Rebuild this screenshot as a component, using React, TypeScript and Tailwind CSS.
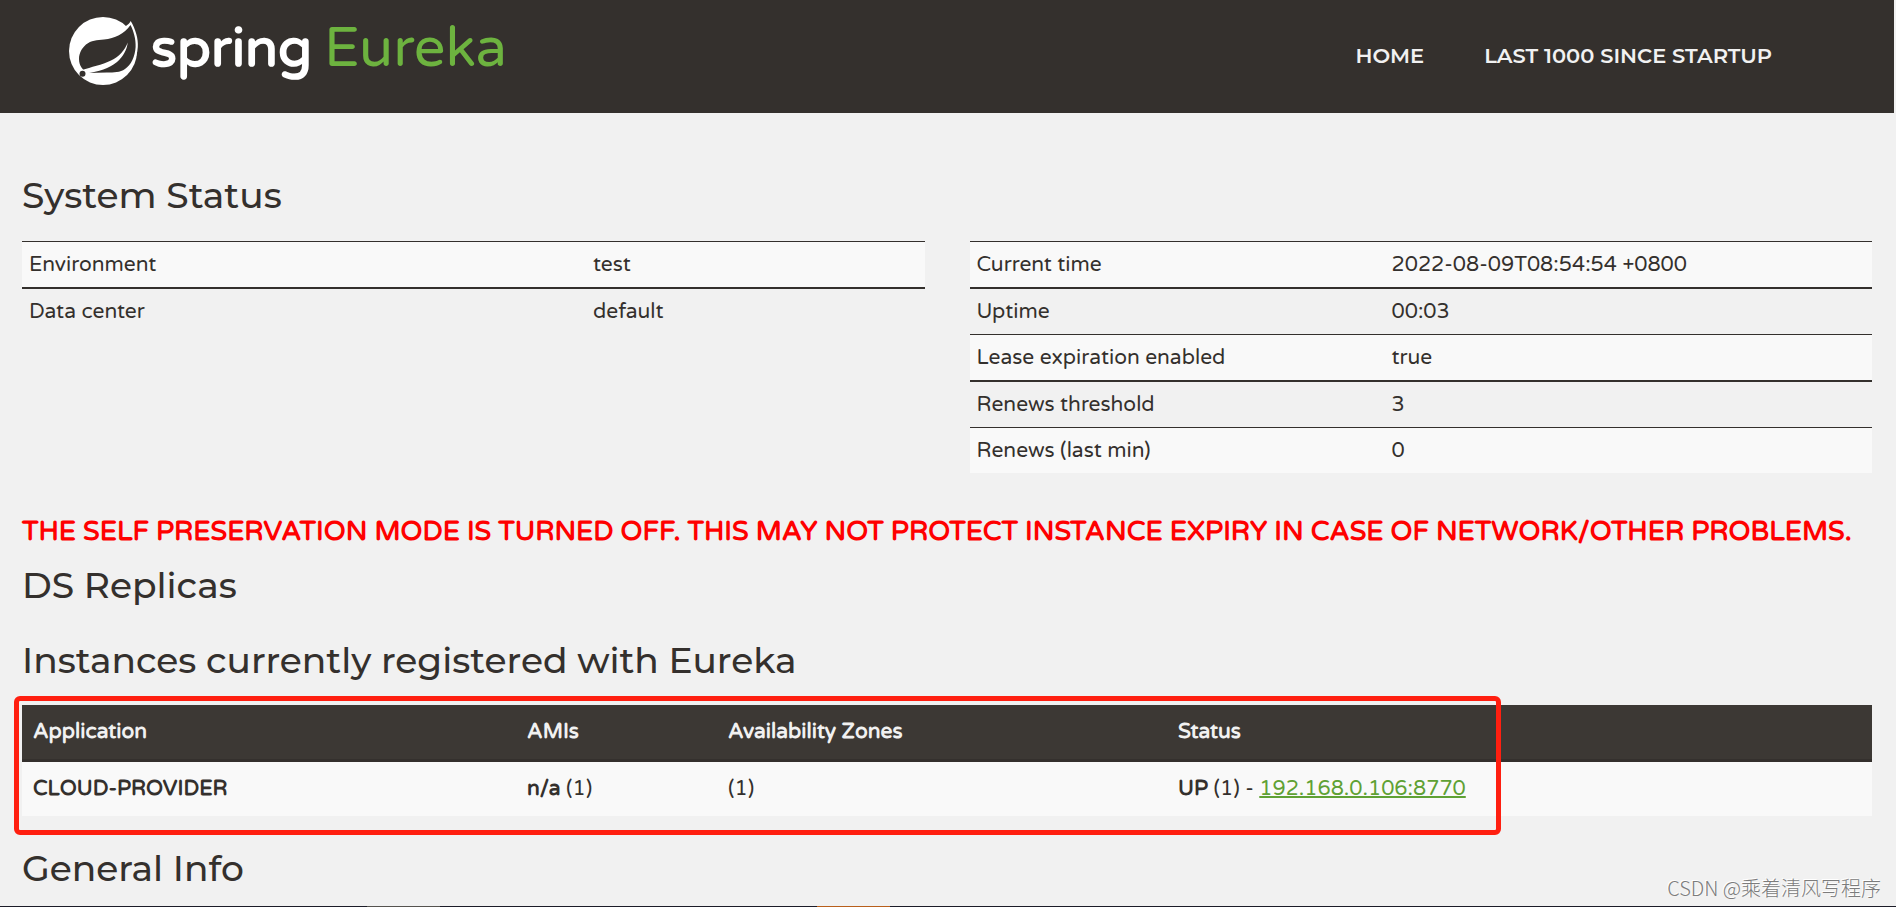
import React from "react";

const systemInfo = [
  ["Environment", "test"],
  ["Data center", "default"],
];

const runtimeInfo = [
  ["Current time", "2022-08-09T08:54:54 +0800"],
  ["Uptime", "00:03"],
  ["Lease expiration enabled", "true"],
  ["Renews threshold", "3"],
  ["Renews (last min)", "0"],
];

function SpringLeaf() {
  return (
    <svg viewBox="0 0 70 68" className="h-[68px] w-[70px]" aria-hidden="true">
      <circle cx="34" cy="34" r="34" fill="#fff" />
      <path
        d="M61.7 4C66.500 12 69.500 22 68.800 30C68 42 63 52 54 58L40 58L50 12C56 10 59.500 8 61.700 4Z"
        fill="#fff"
      />
      <path
        d="M61.500 8C64.500 14 67 22 66.600 30C66 40 62 48 56 52C51 55.500 45 55.500 38 55.600L18 56C14 53 10 49 10 42C10 36 13 31 17 27.500C22 23.500 28 23 35 22.500C46 21.500 55 17 61.500 8Z"
        fill="#34302d"
      />
      <path d="M58.700 25.500C56 33 50 40 42 43.500C33 48 22 50 13 53L17 56.500C30 54.500 40 51.500 48 45C54 39.500 58 33 58.700 25.500Z" fill="#fff" />
      <circle cx="13.500" cy="56.700" r="3" fill="#34302d" />
    </svg>
  );
}

function Heading({ children }: { children: React.ReactNode }) {
  return <h1 className="font-['Montserrat','Inter',sans-serif] text-4xl leading-10 font-medium">{children}</h1>;
}

function InfoTable({ rows, label, firstColumn }: { rows: string[][]; label: string; firstColumn: string }) {
  return (
    <table aria-label={label} className="w-full table-fixed border-collapse text-[21px] leading-[27px]">
      <colgroup>
        <col className={firstColumn} />
        <col />
      </colgroup>
      <tbody>
        {rows.map(([name, value], i) => (
          <tr
            key={name}
            className={i % 2 === 0 ? "border-t border-[#34302d] bg-[#f9f9f9]" : "border-t-2 border-[#34302d]"}
          >
            <td className="px-[7px] py-[9px]">{name}</td>
            <td className="px-[7px] py-[9px]">{value}</td>
          </tr>
        ))}
      </tbody>
    </table>
  );
}

export default function App() {
  return (
    <div className="relative h-screen overflow-hidden bg-[#f1f1f1] pr-0.5 font-['Varela_Round','Inter',sans-serif] text-[#34302d]">
      <header className="flex h-[113px] items-start justify-between bg-[#34302d] pr-[122px] pl-[69px]">
        <a href="#" className="flex items-start gap-3 pt-[17px]">
          <SpringLeaf />
          <span className="flex items-baseline gap-3 pt-0.5 leading-[60px]">
            <span className="text-[54px] font-bold text-white">spring</span>
            <span className="text-[56px] text-[#6db33f]">Eureka</span>
          </span>
        </a>
        <nav className="flex gap-[60px] pt-[42px] font-['Montserrat','Inter',sans-serif] text-[21px] leading-7 font-semibold text-[#f1f1f1]">
          <a href="#">HOME</a>
          <a href="#">LAST 1000 SINCE STARTUP</a>
        </nav>
      </header>

      <main className="px-[22px] pt-[62px]">
        <Heading>System Status</Heading>
        <div className="mt-[26px] grid grid-cols-2 items-start gap-[45px]">
          <InfoTable rows={systemInfo} label="System" firstColumn="w-[564px]" />
          <InfoTable rows={runtimeInfo} label="Runtime" firstColumn="w-[415px]" />
        </div>

        <h4 className="mt-[43px] text-[27px] leading-8 font-bold whitespace-nowrap text-[#ff0000]">
          THE SELF PRESERVATION MODE IS TURNED OFF. THIS MAY NOT PROTECT INSTANCE EXPIRY IN CASE OF NETWORK/OTHER
          PROBLEMS.
        </h4>

        <div className="mt-[17px] flex flex-col gap-[35px]">
          <Heading>DS Replicas</Heading>
          <Heading>Instances currently registered with Eureka</Heading>
        </div>

        <div className="relative mt-[25px]">
          <table className="w-full table-fixed border-separate border-spacing-0 text-[21px] leading-7">
            <thead>
              <tr className="bg-[#3c3834] text-left text-[#f1f1f1]">
                <th className="w-[494px] border-b-[3px] border-[#34302d] px-[11px] py-[13px] font-bold">
                  Application
                </th>
                <th className="w-[201px] border-b-[3px] border-[#34302d] px-[11px] py-[13px] font-bold">AMIs</th>
                <th className="w-[450px] border-b-[3px] border-[#34302d] px-[11px] py-[13px] font-bold">
                  Availability Zones
                </th>
                <th className="border-b-[3px] border-[#34302d] px-[11px] py-[13px] font-bold">Status</th>
              </tr>
            </thead>
            <tbody>
              <tr className="bg-[#f9f9f9]">
                <td className="px-[11px] py-[13px] font-bold">CLOUD-PROVIDER</td>
                <td className="px-[11px] py-[13px]">
                  <b className="font-bold">n/a</b> (1)
                </td>
                <td className="px-[11px] py-[13px]">(1)</td>
                <td className="px-[11px] py-[13px]">
                  <b className="font-bold">UP</b> (1) -{" "}
                  <a href="#" className="text-[#5fa134] underline decoration-2">
                    192.168.0.106:8770
                  </a>
                </td>
              </tr>
            </tbody>
          </table>
          <div className="pointer-events-none absolute -top-[9px] -left-2 h-[139px] w-[1487px] rounded-md border-[5px] border-[#ff1f10]" />
        </div>

        <div className="mt-8">
          <Heading>General Info</Heading>
        </div>
      </main>

      <p className="absolute right-[15px] bottom-[5px] font-['Noto_Sans_CJK_SC',sans-serif] text-xl leading-7 font-light text-[#7c7c7c] [text-shadow:-1px_-1px_0_#fff]">
        CSDN @乘着清风写程序
      </p>
      <div className="absolute inset-x-0 bottom-0 flex h-px bg-[#1c1c28]">
        <span className="ml-[367px] w-[73px] bg-[#55534f]" />
        <span className="ml-[377px] w-[73px] bg-[#b85f1c]" />
      </div>
    </div>
  );
}
